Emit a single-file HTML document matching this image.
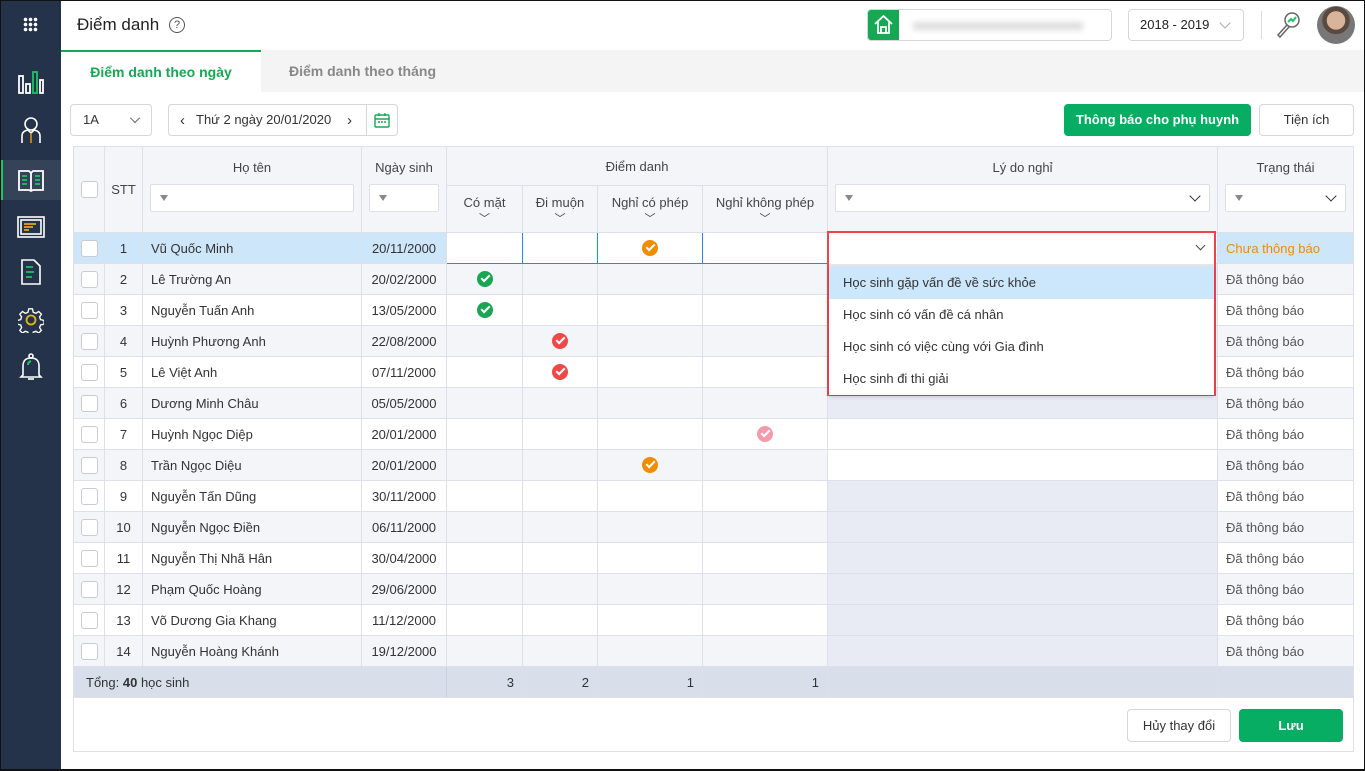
<!DOCTYPE html>
<html><head><meta charset="utf-8">
<style>
*{box-sizing:border-box}
body{margin:0;width:1365px;height:771px;overflow:hidden;font-family:"Liberation Sans",sans-serif;background:#fff;position:relative;color:#333}
.frame{position:absolute;left:0;top:0;width:1365px;height:771px;border:1px solid #111;border-bottom-width:2px;pointer-events:none;z-index:50}
.side{position:absolute;left:0;top:0;width:61px;height:771px;background:#24324a}
.side .act{position:absolute;left:0;top:160px;width:61px;height:40px;background:#354359;border-left:3px solid #1ec463}
.hdr{position:absolute;left:61px;top:0;right:0;height:50px;background:#fff;box-shadow:0 1px 3px rgba(0,0,0,.08)}
.tabs{position:absolute;left:61px;top:50px;right:0;height:42px;background:#f4f4f4}
.tab1{position:absolute;left:0;top:0;width:200px;height:42px;background:#fff;border-top:2px solid #16a852;color:#16a852;font-weight:bold;font-size:14px;text-align:center;line-height:40px}
.tab2{position:absolute;left:228px;top:0;line-height:42px;color:#888;font-weight:bold;font-size:14px}
.box{position:absolute;border:1px solid #d4d6dc;border-radius:4px;background:#fff;font-size:13px}
table{position:absolute;left:73px;top:146px;border-collapse:collapse;table-layout:fixed;font-size:13px}
td,th{border:1px solid #dde0ea;padding:0;height:31px}
th{background:#f4f5f9;font-weight:normal;color:#444}
tr.g td{background:#f4f5f9}
tr.w td{background:#fff}
.cb{display:block;margin:0 auto;width:17px;height:17px;border:1px solid #c8cbd3;border-radius:3px;background:#fff}
.c{text-align:center}.l{padding-left:8px}
.ld{background:#e8ebf3!important}
.ok{display:block;margin:0 auto;width:16px;height:16px;border-radius:50%;position:relative}
.ok:after{content:"";position:absolute;left:4px;top:4px;width:7px;height:3px;border-left:2px solid #fff;border-bottom:2px solid #fff;transform:rotate(-45deg)}
.flt{margin:0 7px;height:28px;border:1px solid #dde0ea;background:#fff;border-radius:2px;position:relative}
.flt:before{content:"";position:absolute;left:9px;top:10px;border-left:4px solid transparent;border-right:4px solid transparent;border-top:6px solid #888}
.chev{position:absolute;width:8px;height:8px;border-right:1.6px solid #333;border-bottom:1.6px solid #333;transform:rotate(45deg)}
.st{padding-left:8px;color:#555}
.btn{position:absolute;border-radius:4px;font-size:13px;text-align:center}
</style></head><body>
<div class="side">
 <div style="position:absolute;left:23px;top:17px;width:15px;height:15px;background:radial-gradient(circle,#fff 1.6px,transparent 2px) 0 0/5px 5px"></div>
 <svg style="position:absolute;left:18px;top:70px" width="26" height="24" fill="none" stroke="#fff" stroke-width="1.8"><rect x="1" y="6" width="4" height="17"/><rect x="8" y="14" width="4" height="9"/><rect x="15" y="2" width="4" height="21" stroke="#1ec463"/><rect x="22" y="10" width="3" height="13"/></svg>
 <svg style="position:absolute;left:19px;top:116px" width="24" height="28" fill="none" stroke="#fff" stroke-width="1.6"><circle cx="12" cy="8" r="6"/><path d="M3 27v-7q0-5 6-6l3 3 3-3q6 1 6 6v7"/><path d="M12 17v10" stroke="#f08c00"/></svg>
 <div class="act"></div>
 <svg style="position:absolute;left:17px;top:168px" width="28" height="24" fill="none" stroke="#fff" stroke-width="1.8"><path d="M2 3h10l2 2 2-2h10v19H16l-2 1-2-1H2z"/><path d="M14 5v17"/><path d="M5 8h5M5 12h5M5 16h5M18 8h5M18 12h5M18 16h5" stroke="#1ec463"/></svg>
 <svg style="position:absolute;left:17px;top:216px" width="28" height="22" fill="none" stroke="#fff" stroke-width="1.6"><rect x="1" y="1" width="26" height="20"/><rect x="4" y="4" width="20" height="14"/><path d="M7 8h12M7 11h9M7 14h5" stroke="#e3a51b" stroke-width="1.8"/></svg>
 <svg style="position:absolute;left:21px;top:259px" width="20" height="26" fill="none" stroke="#fff" stroke-width="1.6"><path d="M1 1h12l6 6v18H1z"/><path d="M5 8h7M5 13h8M5 18h6" stroke="#1ec463" stroke-width="1.8"/></svg>
 <svg style="position:absolute;left:18px;top:307px" width="26" height="26" fill="none" stroke="#fff" stroke-width="1.5"><path d="M11 1h4l1 4 3 1 3-2 3 3-2 3 1 3 4 1v4l-4 1-1 3 2 3-3 3-3-2-3 1-1 4h-4l-1-4-3-1-3 2-3-3 2-3-1-3-4-1v-4l4-1 1-3-2-3 3-3 3 2 3-1z" transform="scale(.9) translate(1 1)"/><circle cx="13" cy="13" r="4.5" stroke="#e3b31b" stroke-width="1.8"/></svg>
 <svg style="position:absolute;left:19px;top:353px" width="24" height="28" fill="none" stroke="#fff" stroke-width="1.6"><circle cx="12" cy="3" r="2"/><path d="M4 22V13q0-8 8-8t8 8v9l2 2H2z"/><path d="M9 26h6"/><path d="M9 12q0-3 3-4" stroke="#1ec463" stroke-width="2"/></svg>
</div>
<div class="hdr">
 <div style="position:absolute;left:16px;top:15px;font-size:17px;color:#222">Điểm danh</div>
 <div style="position:absolute;left:108px;top:17px;width:16px;height:16px;border:1.3px solid #555;border-radius:50%;font-size:11px;text-align:center;line-height:14px;color:#555">?</div>
 <div style="position:absolute;left:806px;top:9px;width:245px;height:32px;border:1px solid #d4d6dc;border-radius:4px;overflow:hidden;background:#fff">
  <div style="width:31px;height:32px;background:#16a852;position:absolute;left:0;top:-1px"><svg width="31" height="32" fill="none" stroke="#fff" stroke-width="1.8"><path d="M7 15l8.5-8 8.5 8M10 13v11h11V13M13 24v-6h5v6"/></svg></div>
  <div style="position:absolute;left:45px;top:12px;width:170px;height:8px;background:#ddd;filter:blur(3px)"></div>
 </div>
 <div class="box" style="left:1067px;top:9px;width:116px;height:32px;line-height:30px;padding-left:11px;font-size:13px;color:#222">2018 - 2019</div>
 <div class="chev" style="left:1160px;top:19px;border-color:#aaa"></div>
 <div style="position:absolute;left:1200px;top:11px;width:1px;height:28px;background:#ddd"></div>
 <svg style="position:absolute;left:1214px;top:11px" width="26" height="28" fill="none" stroke="#666" stroke-width="1.5"><circle cx="17" cy="9" r="7"/><path d="M12 14L3 24l2 2 9-10"/><path d="M13 11l3-3 2 2 3-4" stroke="#1ec463" stroke-width="2"/></svg>
 <div style="position:absolute;left:1256px;top:6px;width:38px;height:38px;border-radius:50%;background:radial-gradient(circle at 50% 38%,#d8b49a 0 30%,#5a4a40 31% 45%,#777 46%);"></div>
</div>
<div class="tabs"><div class="tab1">Điểm danh theo ngày</div><div class="tab2">Điểm danh theo tháng</div></div>

<div class="box" style="left:70px;top:104px;width:82px;height:32px;line-height:30px;padding-left:12px">1A</div>
<div class="chev" style="left:131px;top:114px;border-color:#555;transform:rotate(45deg) scale(.9)"></div>
<div class="box" style="left:168px;top:104px;width:230px;height:32px;line-height:30px;padding-left:27px">Thứ 2 ngày 20/01/2020</div>
<div style="position:absolute;left:180px;top:112px;font-size:15px;color:#333">‹</div>
<div style="position:absolute;left:347px;top:112px;font-size:15px;color:#333">›</div>
<div style="position:absolute;left:366px;top:105px;width:1px;height:30px;background:#d4d6dc"></div>
<svg style="position:absolute;left:374px;top:112px" width="16" height="16" fill="none" stroke="#16a852" stroke-width="1.4"><rect x="1" y="3" width="14" height="12" rx="1"/><path d="M1 7h14M5 1v3M11 1v3M4 10h2M7 10h2M10 10h2"/></svg>
<div class="btn" style="left:1064px;top:104px;width:187px;height:32px;background:#06ad62;color:#fff;font-weight:bold;line-height:32px">Thông báo cho phụ huynh</div>
<div class="btn" style="left:1259px;top:104px;width:95px;height:32px;border:1px solid #d4d6dc;line-height:30px;color:#333">Tiện ích</div>

<div style="position:absolute;left:73px;top:146px;width:1281px;height:606px;border:1px solid #dde0ea"></div>
<table>
<colgroup><col style="width:31px"><col style="width:38px"><col style="width:219px"><col style="width:85px"><col style="width:76px"><col style="width:75px"><col style="width:105px"><col style="width:125px"><col style="width:390px"><col style="width:136px"></colgroup>
<tr style="height:39px"><th rowspan="2"><span class="cb"></span></th><th rowspan="2">STT</th><th rowspan="2" style="vertical-align:top;padding-top:13px">Họ tên<div class="flt" style="margin-top:9px"></div></th><th rowspan="2" style="vertical-align:top;padding-top:13px">Ngày sinh<div class="flt" style="margin-top:9px"></div></th><th colspan="4">Điểm danh</th><th rowspan="2" style="vertical-align:top;padding-top:13px">Lý do nghỉ<div class="flt" style="margin-top:9px"><span class="chev" style="right:10px;top:7px"></span></div></th><th rowspan="2" style="vertical-align:top;padding-top:13px">Trạng thái<div class="flt" style="margin-top:9px"><span class="chev" style="right:10px;top:7px"></span></div></th></tr>
<tr style="height:47px"><th style="vertical-align:top;padding-top:9px">Có mặt<br><span style="font-size:11px">﹀</span></th><th style="vertical-align:top;padding-top:9px">Đi muộn<br><span style="font-size:11px">﹀</span></th><th style="vertical-align:top;padding-top:9px">Nghỉ có phép<br><span style="font-size:11px">﹀</span></th><th style="vertical-align:top;padding-top:9px">Nghỉ không phép<br><span style="font-size:11px">﹀</span></th></tr>
<tr style="background:#cde6fa"><td style="background:#cde6fa"><span class="cb"></span></td><td class="c" style="background:#cde6fa">1</td><td class="l" style="background:#cde6fa">Vũ Quốc Minh</td><td class="c" style="background:#cde6fa">20/11/2000</td><td style="background:#fff;border:1px solid #1a90e0"></td><td style="background:#fff;border:1px solid #1a90e0"></td><td style="background:#fff;border:1px solid #1a90e0"><span class="ok" style="background:#f08c00"></span></td><td style="background:#fff;border:1px solid #1a90e0"></td><td style="background:#fff"></td><td class="st" style="background:#cde6fa;color:#f08c00">Chưa thông báo</td></tr>
<tr class="g"><td><span class="cb"></span></td><td class="c">2</td><td class="l">Lê Trường An</td><td class="c">20/02/2000</td><td><span class="ok" style="background:#1aa552"></span></td><td></td><td></td><td></td><td></td><td class="st">Đã thông báo</td></tr>
<tr class="w"><td><span class="cb"></span></td><td class="c">3</td><td class="l">Nguyễn Tuấn Anh</td><td class="c">13/05/2000</td><td><span class="ok" style="background:#1aa552"></span></td><td></td><td></td><td></td><td></td><td class="st">Đã thông báo</td></tr>
<tr class="g"><td><span class="cb"></span></td><td class="c">4</td><td class="l">Huỳnh Phương Anh</td><td class="c">22/08/2000</td><td></td><td><span class="ok" style="background:#f04848"></span></td><td></td><td></td><td></td><td class="st">Đã thông báo</td></tr>
<tr class="w"><td><span class="cb"></span></td><td class="c">5</td><td class="l">Lê Việt Anh</td><td class="c">07/11/2000</td><td></td><td><span class="ok" style="background:#f04848"></span></td><td></td><td></td><td></td><td class="st">Đã thông báo</td></tr>
<tr class="g"><td><span class="cb"></span></td><td class="c">6</td><td class="l">Dương Minh Châu</td><td class="c">05/05/2000</td><td></td><td></td><td></td><td></td><td class="ld"></td><td class="st">Đã thông báo</td></tr>
<tr class="w"><td><span class="cb"></span></td><td class="c">7</td><td class="l">Huỳnh Ngọc Diệp</td><td class="c">20/01/2000</td><td></td><td></td><td></td><td><span class="ok" style="background:#f59aaa"></span></td><td></td><td class="st">Đã thông báo</td></tr>
<tr class="g"><td><span class="cb"></span></td><td class="c">8</td><td class="l">Trần Ngọc Diệu</td><td class="c">20/01/2000</td><td></td><td></td><td><span class="ok" style="background:#f08c00"></span></td><td></td><td style="background:#fff"></td><td class="st">Đã thông báo</td></tr>
<tr class="w"><td><span class="cb"></span></td><td class="c">9</td><td class="l">Nguyễn Tấn Dũng</td><td class="c">30/11/2000</td><td></td><td></td><td></td><td></td><td class="ld"></td><td class="st">Đã thông báo</td></tr>
<tr class="g"><td><span class="cb"></span></td><td class="c">10</td><td class="l">Nguyễn Ngọc Điền</td><td class="c">06/11/2000</td><td></td><td></td><td></td><td></td><td class="ld"></td><td class="st">Đã thông báo</td></tr>
<tr class="w"><td><span class="cb"></span></td><td class="c">11</td><td class="l">Nguyễn Thị Nhã Hân</td><td class="c">30/04/2000</td><td></td><td></td><td></td><td></td><td class="ld"></td><td class="st">Đã thông báo</td></tr>
<tr class="g"><td><span class="cb"></span></td><td class="c">12</td><td class="l">Phạm Quốc Hoàng</td><td class="c">29/06/2000</td><td></td><td></td><td></td><td></td><td class="ld"></td><td class="st">Đã thông báo</td></tr>
<tr class="w"><td><span class="cb"></span></td><td class="c">13</td><td class="l">Võ Dương Gia Khang</td><td class="c">11/12/2000</td><td></td><td></td><td></td><td></td><td class="ld"></td><td class="st">Đã thông báo</td></tr>
<tr class="g"><td><span class="cb"></span></td><td class="c">14</td><td class="l">Nguyễn Hoàng Khánh</td><td class="c">19/12/2000</td><td></td><td></td><td></td><td></td><td class="ld"></td><td class="st">Đã thông báo</td></tr>
<tr style="background:#d9dfea"><td colspan="4" style="padding-left:12px;border-right-color:#c9d0de">Tổng: <b>40</b> học sinh</td><td style="text-align:right;padding-right:8px">3</td><td style="text-align:right;padding-right:8px">2</td><td style="text-align:right;padding-right:8px">1</td><td style="text-align:right;padding-right:8px">1</td><td></td><td></td></tr>
</table>

<div style="position:absolute;left:827px;top:231px;width:389px;height:165px;border:2px solid #f5414a;z-index:10">
 <div style="height:31px;background:#fff;position:relative"><span class="chev" style="right:10px;top:9px;width:7px;height:7px;border-color:#445"></span></div>
 <div style="height:3px;background:#e4e6ea"></div>
 <div style="background:#fff;font-size:13px;color:#333;box-shadow:0 2px 4px rgba(0,0,0,.15)">
  <div style="height:32px;line-height:32px;padding-left:14px;background:#cce6fb">Học sinh gặp vấn đề về sức khỏe</div>
  <div style="height:32px;line-height:32px;padding-left:14px">Học sinh có vấn đề cá nhân</div>
  <div style="height:32px;line-height:32px;padding-left:14px">Học sinh có việc cùng với Gia đình</div>
  <div style="height:32px;line-height:32px;padding-left:14px">Học sinh đi thi giải</div>
 </div>
</div>

<div class="btn" style="left:1127px;top:709px;width:104px;height:33px;border:1px solid #d4d6dc;line-height:31px;color:#333">Hủy thay đổi</div>
<div class="btn" style="left:1239px;top:709px;width:104px;height:33px;background:#06ad62;color:#fff;font-weight:bold;line-height:33px">Lưu</div>
<div class="frame"></div>
</body></html>
